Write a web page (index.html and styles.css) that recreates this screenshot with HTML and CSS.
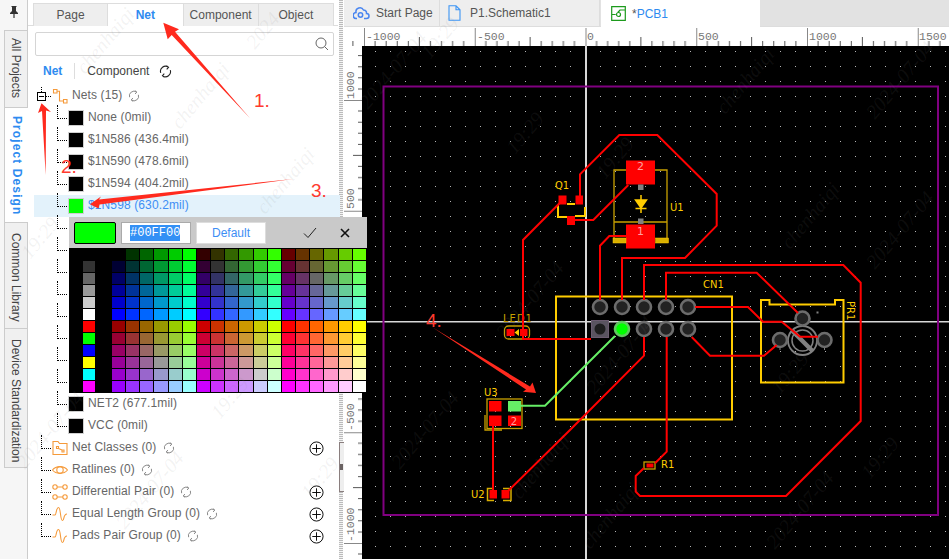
FILE: index.html
```html
<!DOCTYPE html>
<html lang="en">
<head>
<meta charset="utf-8">
<title>PCB1</title>
<link rel="stylesheet" href="styles.css">
</head>
<body>
<svg class="defs" width="0" height="0" aria-hidden="true">
  <symbol id="refresh" viewBox="0 0 12 12">
    <path class="ic" d="M1.6 7.2A4.6 4.6 0 0 1 8.6 2M10.4 4.8A4.6 4.6 0 0 1 3.4 10M6.9 .6 8.8 2.1 7.1 4M5.1 11.4 3.2 9.9 4.9 8"/>
  </symbol>
  <symbol id="plus" viewBox="0 0 16 16">
    <circle class="ic" cx="8" cy="8" r="7"/><path class="ic" d="M3.5 8h9M8 3.5v9"/>
  </symbol>
</svg>
<div class="app">
  <nav class="rail">
    <div class="pin"><svg width="10" height="12" viewBox="0 0 10 12"><path class="pinshape" d="M2.5 0h5v1H7v4l2 2v1H5.6v4h-1.200V8H1V7l2-2V1h-.5z"/></svg></div>
    <div class="rtab">All Projects</div>
    <div class="rtab rtab-active">Project Design</div>
    <div class="rtab rtab-lib">Common Library</div>
    <div class="rtab rtab-dev">Device Standardization</div>
  </nav>

  <aside class="panel">
    <div class="ptabs">
      <div class="ptab">Page</div>
      <div class="ptab ptab-active">Net</div>
      <div class="ptab">Component</div>
      <div class="ptab">Object</div>
    </div>
    <div class="search">
      <svg width="14" height="14" viewBox="0 0 14 14"><circle class="srch" cx="6" cy="6" r="5"/><path class="srch" d="M9.600 9.600 13 13"/></svg>
    </div>
    <div class="subtabs">
      <span class="sub-net">Net</span>
      <span class="sub-sep"></span>
      <span class="sub-comp">Component</span>
      <svg class="refresh-dark" width="13" height="13"><use href="#refresh"/></svg>
    </div>
    <div class="tree">
      <div class="row top first">
        <span class="expand"></span><span class="dots"></span>
        <svg class="ticon" width="16" height="16" viewBox="0 0 16 16"><path class="or" d="M1.500 1.500h3.500v3.500h-3.500zM11.500 11.500h3.500v3.500h-3.500zM5 3.200h2.500v9.800h4"/></svg>
        <span class="lbl">Nets (15)</span>
        <svg class="refresh" width="12" height="12"><use href="#refresh"/></svg>
      </div>
      <div class="row child"><span class="conn"></span><span class="sw"></span><span class="lbl">None (0mil)</span></div>
      <div class="row child"><span class="conn"></span><span class="sw"></span><span class="lbl">$1N586 (436.4mil)</span></div>
      <div class="row child"><span class="conn"></span><span class="sw"></span><span class="lbl">$1N590 (478.6mil)</span></div>
      <div class="row child"><span class="conn"></span><span class="sw"></span><span class="lbl">$1N594 (404.2mil)</span></div>
      <div class="row child selected"><span class="conn"></span><span class="sw sw-green"></span><span class="lbl">$1N598 (630.2mil)</span></div>
      <div class="row child"><span class="conn"></span></div>
      <div class="row child"><span class="conn"></span></div>
      <div class="row child"><span class="conn"></span></div>
      <div class="row child"><span class="conn"></span></div>
      <div class="row child"><span class="conn"></span></div>
      <div class="row child"><span class="conn"></span></div>
      <div class="row child"><span class="conn"></span></div>
      <div class="row child"><span class="conn"></span></div>
      <div class="row child"><span class="conn"></span><span class="sw"></span><span class="lbl">NET2 (677.1mil)</span></div>
      <div class="row child last"><span class="conn"></span><span class="sw"></span><span class="lbl">VCC (0mil)</span></div>
      <div class="row top">
        <span class="conn"></span>
        <svg class="ticon" width="16" height="16" viewBox="0 0 16 16"><path class="or" d="M1 14.500v-13h5l1.500 2h7.500v11zM4.500 6.500h2v2h-2zM10 10h2v2h-2zM6.500 8.500l3.500 1.500"/></svg>
        <span class="lbl">Net Classes (0)</span>
        <svg class="refresh" width="12" height="12"><use href="#refresh"/></svg>
        <svg class="plus" width="15" height="15"><use href="#plus"/></svg>
      </div>
      <div class="row top">
        <span class="conn"></span>
        <svg class="ticon" width="16" height="16" viewBox="0 0 16 16"><path class="or" d="M.5 8C4 3.500 12 3.500 15.500 8 12 12.500 4 12.500 .5 8z"/><circle class="or" cx="8" cy="8" r="3.200"/></svg>
        <span class="lbl">Ratlines (0)</span>
        <svg class="refresh" width="12" height="12"><use href="#refresh"/></svg>
      </div>
      <div class="row top">
        <span class="conn"></span>
        <svg class="ticon" width="16" height="16" viewBox="0 0 16 16"><circle class="or" cx="3" cy="3" r="2.200"/><circle class="or" cx="13" cy="3" r="2.200"/><circle class="or" cx="3" cy="13" r="2.200"/><circle class="or" cx="13" cy="13" r="2.200"/><path class="or" d="M5.200 3h5.600M5.200 13h5.600"/></svg>
        <span class="lbl">Differential Pair (0)</span>
        <svg class="refresh" width="12" height="12"><use href="#refresh"/></svg>
        <svg class="plus" width="15" height="15"><use href="#plus"/></svg>
      </div>
      <div class="row top">
        <span class="conn"></span>
        <svg class="ticon" width="16" height="16" viewBox="0 0 16 16"><path class="or" d="M.5 9H3C4.500 9 4 1.500 6.500 1.500S8 14.500 10.500 14.500C12.500 14.500 11 8 15 8"/></svg>
        <span class="lbl">Equal Length Group (0)</span>
        <svg class="refresh" width="12" height="12"><use href="#refresh"/></svg>
        <svg class="plus" width="15" height="15"><use href="#plus"/></svg>
      </div>
      <div class="row top">
        <span class="conn"></span>
        <svg class="ticon" width="16" height="16" viewBox="0 0 16 16"><path class="or" d="M.5 9H3C4.500 9 4 1.500 6.500 1.500S8 14.500 10.500 14.500C12.500 14.500 11 8 15 8"/></svg>
        <span class="lbl">Pads Pair Group (0)</span>
        <svg class="refresh" width="12" height="12"><use href="#refresh"/></svg>
        <svg class="plus" width="15" height="15"><use href="#plus"/></svg>
      </div>
    </div>

    <div class="picker">
      <div class="pick-bar">
        <span class="pick-cur"></span>
        <span class="pick-input"><span class="pick-sel">#00FF00</span></span>
        <span class="pick-def">Default</span>
        <svg class="pick-ok" width="14" height="12" viewBox="0 0 14 12"><path class="pk" d="M1 6.500 5 10.500 13 1"/></svg>
        <svg class="pick-x" width="10" height="10" viewBox="0 0 10 10"><path class="pkx" d="M1 1 9 9M9 1 1 9"/></svg>
      </div>
      <div class="pick-grid" id="palette"></div>
    </div>
  </aside>

  <div class="splitter"><div class="handle"></div></div>

  <main class="main">
    <div class="doctabs">
      <div class="dtab dtab-start">
        <svg width="17" height="14" viewBox="0 0 17 14"><path class="cloud" d="M4 12.500H3.500a3 3 0 0 1-.5-6A4 4 0 0 1 10.500 4a3 3 0 0 1 3 3.500 2.500 2.500 0 0 1 0 5H11"/><circle class="cloud" cx="7.500" cy="9" r="2.200"/></svg>
        <span>Start Page</span>
      </div>
      <div class="dtab dtab-sch">
        <svg width="13" height="16" viewBox="0 0 13 16"><path class="doc" d="M1 .8h7l4 4v10.400H1zM8 .8v4h4"/></svg>
        <span>P1.Schematic1</span>
      </div>
      <div class="dtab dtab-pcb">
        <svg width="15" height="15" viewBox="0 0 15 15"><path class="pcbi" d="M.7.7h13.600v13.600H.7zM.7 8.500h4M14.300 4H9L6.800 6.500"/><circle class="pcbi" cx="7.500" cy="8.500" r="2"/></svg>
        <span>*<b class="blue">PCB1</b></span>
      </div>
    </div>
    <svg class="board" viewBox="344 27 605 532" width="605" height="532">
      <defs>
        <pattern id="grid" x="375" y="51" width="15" height="15" patternUnits="userSpaceOnUse"><rect width="1" height="1" class="griddot"/></pattern>
        <pattern id="tx" x="364" y="27" width="110.750" height="19" patternUnits="userSpaceOnUse">
          <path class="tick" d="M11.070 14v5M22.150 14v5M33.220 14v5M44.300 14v5M55.370 10v9M66.450 14v5M77.520 14v5M88.600 14v5M99.670 14v5"/>
          <path class="tick-major" d="M.5 1v18"/>
        </pattern>
        <pattern id="ty" x="344" y="100" width="18" height="110.750" patternUnits="userSpaceOnUse">
          <path class="tick" d="M14 11.070h4M14 22.150h4M14 33.220h4M14 44.300h4M9 55.370h9M14 66.450h4M14 77.520h4M14 88.600h4M14 99.670h4"/>
          <path class="tick-major" d="M0 .5h18"/>
        </pattern>
        <g id="th"><circle r="7" class="thp"/></g>
      </defs>
      <rect x="344" y="27" width="605" height="532" class="ruler-bg"/>
      <rect x="344" y="27" width="605" height="19" fill="url(#tx)"/>
      <rect x="344" y="46" width="18" height="513" fill="url(#ty)"/>
      <text class="rl" x="366" y="40">-1000</text>
      <text class="rl" x="477" y="40">-500</text>
      <text class="rl" x="587" y="40">0</text>
      <text class="rl" x="698" y="40">500</text>
      <text class="rl" x="809" y="40">1000</text>
      <text class="rl" x="919" y="40">1500</text>
      <text class="rl" transform="rotate(-90 354 99)" x="354" y="99">1000</text>
      <text class="rl" transform="rotate(-90 354 209)" x="354" y="209">500</text>
      <text class="rl" transform="rotate(-90 354 320)" x="354" y="320">0</text>
      <text class="rl" transform="rotate(-90 354 431)" x="354" y="431">-500</text>
      <text class="rl" transform="rotate(-90 354 542)" x="354" y="542">-1000</text>

      <rect x="362" y="46" width="587" height="513" class="canvas"/>
      <rect x="362" y="46" width="587" height="513" fill="url(#grid)"/>
      <rect x="585" y="46" width="2" height="513" class="cross"/>
      <rect x="362" y="321" width="587" height="1.500" class="cross"/>
      <rect x="383.500" y="86.500" width="554.500" height="428.500" class="outline"/>

      <!-- U1 -->
      <path class="dsilk" d="M614 240V170h12M655 170h12v70M614 222h53"/>
      <rect x="626" y="160.500" width="29" height="24" class="pad"/>
      <rect x="626" y="224.500" width="29" height="24" class="pad"/>
      <rect x="613" y="238" width="13" height="5" class="goldpad"/>
      <rect x="655.500" y="238" width="13" height="5" class="goldpad"/>
      <rect x="638" y="184.500" width="5.500" height="5.500" class="gpad"/>
      <rect x="638" y="218.500" width="5.500" height="5.500" class="gpad"/>
      <path class="sym" d="M635.500 200h11l-5.500 8zM641 195v18M635.500 208.500h11"/>
      <text class="padt" x="640.500" y="170">2</text>
      <text class="padt" x="640.500" y="235">1</text>
      <text class="silk-t" x="670" y="210.500">U1</text>

      <!-- Q1 -->
      <path class="silk" d="M558 205v12h10M575 216h10v-9M567 204h8"/>
      <rect x="558.500" y="195.500" width="8" height="9" class="pad"/>
      <rect x="575.500" y="195.500" width="7.500" height="9" class="pad"/>
      <rect x="567" y="216" width="8" height="9" class="pad"/>
      <text class="silk-t" x="555" y="188.500">Q1</text>

      <!-- LED1 -->
      <rect x="504.500" y="326" width="25" height="13" rx="4" class="dsilk"/>
      <rect x="506.500" y="329" width="8" height="7" class="pad"/>
      <rect x="520" y="329" width="7.500" height="7" class="pad"/>
      <path class="goldfill" d="M519 329v7l-4.500-3.500z"/>
      <text class="silk-t dim" x="503" y="322">LED1</text>

      <!-- CN1 -->
      <rect x="556" y="296.500" width="176" height="123" class="silk"/>
      <text class="silk-t" x="703" y="288">CN1</text>

      <!-- PR1 -->
      <path class="silk" d="M761 300h8.500v4.500H835V300h8.500v82.500H761z"/>
      <text class="silk-t" transform="rotate(90 847 301)" x="847" y="301">PR1</text>
      <circle cx="802.500" cy="340.500" r="14.500" class="knob"/>
      <circle cx="802.500" cy="340.500" r="10.500" class="knob thin"/>
      <path class="knobbar" d="M791.500 330 813 351.500"/>
      <path class="gtick" d="M780 347v3M824.500 347v3M802.500 326v-1"/>
      <rect x="816.500" y="311.500" width="2" height="2" class="gpad"/>
      <use href="#th" x="802.500" y="318.500"/>
      <use href="#th" x="780" y="340"/>
      <use href="#th" x="824.500" y="340"/>

      <!-- CN1 pads -->
      <use href="#th" x="600" y="307"/>
      <use href="#th" x="622" y="307"/>
      <use href="#th" x="644" y="307"/>
      <use href="#th" x="666" y="307"/>
      <use href="#th" x="688" y="307"/>
      <rect x="591.500" y="320.500" width="17" height="17" class="sqpad"/>
      <circle cx="600" cy="329" r="5.500" class="holec"/>
      <use href="#th" x="644" y="329"/>
      <use href="#th" x="666" y="329"/>
      <use href="#th" x="688" y="329"/>

      <!-- U3 -->
      <path class="dsilk" d="M485 415v15h17"/>
      <rect x="487" y="399" width="35" height="29.500" class="dsilk"/>
      <rect x="489" y="401" width="12.500" height="10.500" class="pad"/>
      <rect x="508" y="401" width="13" height="10.500" class="lgpad"/>
      <rect x="489" y="415.500" width="12.500" height="10.500" class="pad"/>
      <rect x="508" y="415.500" width="13" height="10.500" class="pad"/>
      <text class="padt small" x="514" y="425">2</text>
      <text class="silk-t" x="484" y="395.500">U3</text>

      <!-- U2 -->
      <path class="silk thin-silk" d="M494 488.500h-6.500v12h6.500M503 488.500h8v12h-8"/>
      <rect x="489.500" y="490" width="7.500" height="8.500" class="pad"/>
      <rect x="501.500" y="490" width="8" height="8.500" class="pad"/>
      <text class="silk-t" x="471" y="498">U2</text>

      <!-- R1 -->
      <rect x="644" y="462" width="11" height="7" class="dsilk"/>
      <rect x="646.500" y="463.500" width="7" height="4" class="pad"/>
      <text class="silk-t" x="661" y="468">R1</text>

      <!-- traces -->
      <path class="tr" d="M580 197V174.300L619.300 135H657.300L716.700 194V225.700L685 258H622V300"/>
      <path class="tr" d="M571 220H593.300L628.300 185"/>
      <path class="tr" d="M600 300V245.700L609.300 236H626"/>
      <path class="tr" d="M562.700 200 523 240V339H591"/>
      <path class="tr" d="M644 300V265H843.300L860.700 282.700V421L786 496H640L635.700 491.700V476L644 468"/>
      <path class="tr" d="M655 463.300 666.700 451.700V337"/>
      <path class="tr" d="M666 300V272.700H756.700L798 313"/>
      <path class="tr" d="M695 307H748L763 321.700H781.700L800 336.700H818"/>
      <path class="tr" d="M691.700 337 710 355.700H764L776.700 345"/>
      <path class="tr" d="M644 337V355.700L570 430 505 494"/>
      <path class="tr" d="M493 426V490"/>
      <path class="tr-g" d="M615 336 545 405.700H513.300"/>
      <circle cx="622" cy="329" r="7" class="thg"/>
    </svg>
  </main>
</div>

<svg class="overlay" width="949" height="559" viewBox="0 0 949 559">
  <text class="wm" transform="rotate(-50 85 75)" x="85" y="75">chenhaiqi</text>
  <text class="wm" transform="rotate(-50 255 50)" x="255" y="50">2024</text>
  <text class="wm" transform="rotate(-50 180 130)" x="180" y="130">chenhaiqi</text>
  <text class="wm" transform="rotate(-50 265 215)" x="265" y="215">chenhaiqi</text>
  <text class="wm" transform="rotate(-50 30 260)" x="30" y="260">19:29</text>
  <text class="wm" transform="rotate(-50 25 470)" x="25" y="470">2024-07-04</text>
  <text class="wm" transform="rotate(-50 125 530)" x="125" y="530">2024-07-04</text>
  <text class="wm" transform="rotate(-50 220 420)" x="220" y="420">19:29</text>
  <text class="wm" transform="rotate(-50 310 500)" x="310" y="500">19:29</text>
  <text class="wm" transform="rotate(-50 368 110)" x="368" y="110">2024-07-04</text>
  <text class="wm" transform="rotate(-50 430 60)" x="430" y="60">19:29</text>
  <text class="wm" transform="rotate(-50 515 155)" x="515" y="155">19:29</text>
  <text class="wm" transform="rotate(-50 725 115)" x="725" y="115">chenhaiqi</text>
  <text class="wm" transform="rotate(-50 875 120)" x="875" y="120">2024-07-04</text>
  <text class="wm" transform="rotate(-50 605 180)" x="605" y="180">19:29</text>
  <text class="wm" transform="rotate(-50 505 340)" x="505" y="340">2024-07-04</text>
  <text class="wm" transform="rotate(-50 595 395)" x="595" y="395">2024-07-04</text>
  <text class="wm" transform="rotate(-50 520 500)" x="520" y="500">chenhaiqi</text>
  <text class="wm" transform="rotate(-50 590 550)" x="590" y="550">chenhaiqi</text>
  <text class="wm" transform="rotate(-50 780 395)" x="780" y="395">19:29</text>
  <text class="wm" transform="rotate(-50 870 480)" x="870" y="480">19:29</text>
  <text class="wm" transform="rotate(-50 775 550)" x="775" y="550">2024-07-04</text>
  <text class="wm" transform="rotate(-50 875 270)" x="875" y="270">2024-07-04</text>
  <text class="wm" transform="rotate(-50 790 250)" x="790" y="250">chenhaiqi</text>
  <text class="wm" transform="rotate(-50 400 470)" x="400" y="470">2024-07-04</text>

  <path class="arrow" d="M163.300 22.700 179 29.300 175 31.700 250 118.300 171.700 35 167.700 39.300z"/>
  <path class="arrow" d="M41.500 103.300 51 112 46 110.500 45.700 175 42 111 38 113z"/>
  <path class="arrow" d="M90 204.300 101 196.500 99 199.500 293 179 99.500 204.500 98.500 208.500z"/>
  <path class="arrow" d="M536 393 532.500 382.500 530 386.500 432 327 526 389.500 523 391.700z"/>
  <text class="anno" x="254" y="107">1.</text>
  <text class="anno" x="61" y="173">2.</text>
  <text class="anno" x="311" y="197">3.</text>
  <text class="anno" x="426" y="327">4.</text>
</svg>
<script src="palette.js"></script>
</body>
</html>
```
FILE: styles.css
```css
* { box-sizing: border-box; }
html, body { margin: 0; padding: 0; }
body {
  width: 949px;
  height: 559px;
  overflow: hidden;
  position: relative;
  background: #fff;
  font: 12px "Liberation Sans", Arial, sans-serif;
  color: #555;
}
.defs { position: absolute; }
.app { display: flex; width: 949px; height: 559px; }

/* left rail */
.rail {
  width: 28px;
  flex: none;
  background: #f6f6f6;
  border-right: 1px solid #ccc;
  display: flex;
  flex-direction: column;
  align-items: flex-end;
}
.pin { width: 27px; height: 30px; display: flex; align-items: center; justify-content: center; padding-bottom: 6px; }
.pinshape { fill: #333; }
.rtab {
  width: 24px;
  margin-right: -1px;
  height: 77px;
  writing-mode: vertical-rl;
  background: #f0f0f0;
  border: 1px solid #ccc;
  border-bottom: none;
  border-right: 1px solid #ccc;
  color: #444;
  padding: 7px 0 0;
  line-height: 22px;
  white-space: nowrap;
}
.rtab-active {
  height: 115px;
  background: #fff;
  border-right: none;
  color: #2e8bf0;
  font-weight: bold;
  letter-spacing: 1.1px;
  padding-top: 8px;
}
.rtab-lib { height: 106px; padding-top: 10px; }
.rtab-dev { height: 140px; padding-top: 10px; border-bottom: 1px solid #ccc; }

/* panel */
.panel {
  width: 310px;
  flex: none;
  position: relative;
  background: #fff;
  display: flex;
  flex-direction: column;
}
.ptabs {
  display: flex;
  height: 26px;
  padding: 3px 4px 0 5px;
  border-bottom: 1px solid #ddd;
}
.ptab {
  width: 75.3px;
  height: 23px;
  background: #eee;
  border: 1px solid #ddd;
  border-left: none;
  border-bottom: none;
  text-align: center;
  line-height: 22px;
  color: #555;
}
.ptab:first-child { border-left: 1px solid #ddd; }
.ptab-active {
  background: #fff;
  height: 23px;
  color: #2e8bf0;
  font-weight: bold;
  position: relative;
  box-shadow: 0 1px 0 #fff;
}
.search {
  margin: 6px 0 0 7px;
  width: 299px;
  height: 24px;
  border: 1px solid #d5d5d5;
  border-radius: 2px;
  display: flex;
  align-items: center;
  justify-content: flex-end;
  padding-right: 4px;
}
.srch { fill: none; stroke: #666; stroke-width: 1; }
.subtabs {
  margin-top: 4px;
  height: 22px;
  display: flex;
  align-items: center;
  padding-left: 15px;
}
.sub-net { color: #2e8bf0; font-weight: bold; }
.sub-sep { width: 1px; height: 16px; background: #ddd; margin: 0 12px 0 12px; }
.sub-comp { color: #444; }
.refresh-dark { margin-left: 10px; color: #222; }
.tree { margin-top: 3px; }
.row {
  height: 22px;
  display: flex;
  align-items: center;
  white-space: nowrap;
  color: #666;
}
.top { padding-left: 13px; }
.child { padding-left: 29px; }
.first { padding-left: 9px; }
.conn {
  width: 10px;
  height: 14px;
  flex: none;
  align-self: flex-start;
  margin-top: -2px;
  border-left: 1px dotted #000;
  border-bottom: 1px dotted #000;
}
.expand {
  width: 9px;
  height: 9px;
  flex: none;
  border: 1px solid #000;
  background: linear-gradient(#000, #000) center / 5px 1px no-repeat;
  position: relative;
  margin-top: 1px;
}
.expand::before {
  content: "";
  position: absolute;
  left: 3px;
  top: -6px;
  height: 5px;
  border-left: 1px dotted #000;
}
.dots { width: 5px; border-bottom: 1px dotted #000; flex: none; }
.ticon { margin-left: 1px; flex: none; }
.or { fill: none; stroke: #f59a3a; stroke-width: 1.1; }
.lbl { margin-left: 4px; margin-bottom: 2px; letter-spacing: .12px; }
.sw {
  width: 16px;
  height: 16px;
  flex: none;
  margin-left: 1px;
  background: #000;
  border: 1px solid #d0d0d0;
}
.sw-green { background: #00ff00; }
.selected {
  background: #e3f2fb;
  margin-left: 6px;
  padding-left: 23px;
  margin-right: -2px;
}
.selected .lbl { color: #3d8ef5; }
.refresh { margin-left: 6px; color: #8a8a8a; flex: none; }
.ic { fill: none; stroke: currentColor; stroke-width: 1; }
.plus { margin-left: auto; margin-right: 14px; color: #000; flex: none; }

/* color picker */
.picker {
  position: absolute;
  left: 41px;
  top: 217px;
  width: 298px;
  height: 176px;
  z-index: 5;
  background: #000;
  display: flex;
  flex-direction: column;
}
.pick-bar {
  height: 31px;
  flex: none;
  background: #c9c9c9;
  display: flex;
  align-items: center;
  padding-left: 5px;
}
.pick-cur {
  width: 42px;
  height: 22px;
  background: #00ff00;
  border: 1px solid #000;
  border-radius: 2px;
}
.pick-input {
  width: 70px;
  height: 22px;
  margin-left: 5px;
  background: #fff;
  border: 1px solid #aaa;
  display: flex;
  align-items: center;
  padding-left: 8px;
  font: 12px "Liberation Mono", monospace;
  color: #fff;
}
.pick-sel { background: #3390f5; padding: 1px 0; line-height: 14px; }
.pick-def {
  width: 70px;
  height: 22px;
  margin-left: 5px;
  background: #fff;
  color: #3d8ef5;
  border: 1px solid #ddd;
  text-align: center;
  line-height: 20px;
}
.pick-ok { margin-left: 37px; flex: none; }
.pick-x { margin-left: 23px; flex: none; }
.pk { fill: none; stroke: #222; stroke-width: 1; }
.pkx { fill: none; stroke: #111; stroke-width: 1.6; }
.pick-grid {
  flex: 1;
  display: grid;
  grid-template-columns: 14px 13px 16px repeat(18, 14.17px);
  grid-template-rows: repeat(12, 12px);
  padding-top: 1px;
}
.cell { margin: 0 1px 1px 0; }

/* splitter */
.splitter {
  width: 6px;
  flex: none;
  background: repeating-linear-gradient(#bbb 0 1px, #f4f4f4 1px 2px) 1px 0 / 4px 100% no-repeat #fff;
  padding-top: 442px;
}
.handle {
  width: 6px;
  height: 50px;
  margin-left: 1px;
  border: 1px solid #8a7e7e;
  background: linear-gradient(#6a6262, #6a6262) 0 center / 3px 6px no-repeat #eee;
}

/* doc area */
.main { flex: 1; min-width: 0; display: flex; flex-direction: column; }
.doctabs {
  height: 27px;
  flex: none;
  background: #e2e2e2;
  display: flex;
  border-bottom: 1px solid #ddd;
}
.dtab {
  display: flex;
  align-items: center;
  background: #eee;
  border-right: 1px solid #ddd;
  color: #555;
}
.dtab-start { width: 96px; padding-left: 9px; gap: 6px; }
.dtab-sch { width: 160px; padding-left: 8px; gap: 9px; margin-right: 1px; }
.dtab-pcb { width: 159px; background: #fff; padding-left: 10px; gap: 6px; border: none; height: 27px; }
.blue { color: #2e8bf0; font-weight: normal; }
.cloud { fill: none; stroke: #4a86f0; stroke-width: 1.5; }
.doc { fill: none; stroke: #3d95f5; stroke-width: 1.1; }
.pcbi { fill: none; stroke: #1c9a1c; stroke-width: 1.200; }

/* board */
.board { display: block; flex: none; }
.ruler-bg { fill: #fff; }
.tick { stroke: #555; stroke-width: 1; fill: none; }
.tick-major { stroke: #888; stroke-width: 1; fill: none; }
.rl { font: 11.5px "Liberation Mono", monospace; fill: #777; }
.canvas { fill: #000; }
.griddot { fill: #b4b4b4; }
.cross { fill: #d8d8d8; }
.outline { fill: none; stroke: #800080; stroke-width: 2; }
.pad { fill: #f00; }
.lgpad { fill: #66ee66; }
.gpad { fill: #808080; }
.goldpad { fill: #d9b000; stroke: #ffcc00; stroke-width: .5; }
.goldfill { fill: #ffcc00; }
.sym { fill: #ffcc00; stroke: #ffcc00; stroke-width: 1.500; }
.silk { fill: none; stroke: #ffcc00; stroke-width: 2; }
.thin-silk { stroke: #d9ae00; stroke-width: 1.500; }
.dsilk { fill: none; stroke: #c8a000; stroke-width: 1.300; }
.silk-t { font: 10px "DejaVu Sans", sans-serif; fill: #ffcc00; }
.dim { fill: #c8a000; letter-spacing: 1px; }
.padt { font: 11px "DejaVu Sans", sans-serif; fill: #ffa0a0; text-anchor: middle; }
.small { font-size: 10px; }
.thp { fill: #222; stroke: #6c6c6c; stroke-width: 2.600; }
.sqpad { fill: #5a5460; stroke: #6c5c70; stroke-width: 1; }
.holec { fill: #1e1e1e; }
.thg { fill: #00ff00; stroke: #5fc85f; stroke-width: 2.600; }
.knob { fill: none; stroke: #808080; stroke-width: 1.800; }
.thin { stroke-width: 1.500; }
.knobbar { stroke: #808080; stroke-width: 4.500; fill: none; }
.gtick { stroke: #808080; stroke-width: 1; fill: none; }
.tr { fill: none; stroke: #f00; stroke-width: 2; }
.tr-g { fill: none; stroke: #66ee66; stroke-width: 2; }

/* overlay */
.overlay { position: absolute; left: 0; top: 0; z-index: 10; pointer-events: none; }
.wm { font: italic 20px "Liberation Serif", serif; fill: rgba(130,130,130,.1); }
.arrow { fill: #ff2a1e; }
.anno { font: 19px "Liberation Sans", sans-serif; fill: #ff3a2e; }
```
FILE: palette.js
```js
(function () {
  var levels = ["00", "33", "66", "99", "cc", "ff"];
  var side = ["000000", "333333", "666666", "999999", "cccccc", "ffffff",
              "ff0000", "00ff00", "0000ff", "ffff00", "00ffff", "ff00ff"];
  var grid = document.getElementById("palette");
  function cell(color) {
    var c = document.createElement("span");
    c.className = "cell";
    c.style.background = "#" + color;
    grid.appendChild(c);
  }
  function gap() {
    var c = document.createElement("span");
    grid.appendChild(c);
  }
  for (var row = 0; row < 12; row++) {
    var b = levels[row % 6];
    var block = row < 6 ? 0 : 3;
    gap();
    cell(side[row]);
    gap();
    for (var group = 0; group < 3; group++) {
      for (var g = 0; g < 6; g++) {
        cell(levels[block + group] + levels[g] + b);
      }
    }
  }
})();
```
